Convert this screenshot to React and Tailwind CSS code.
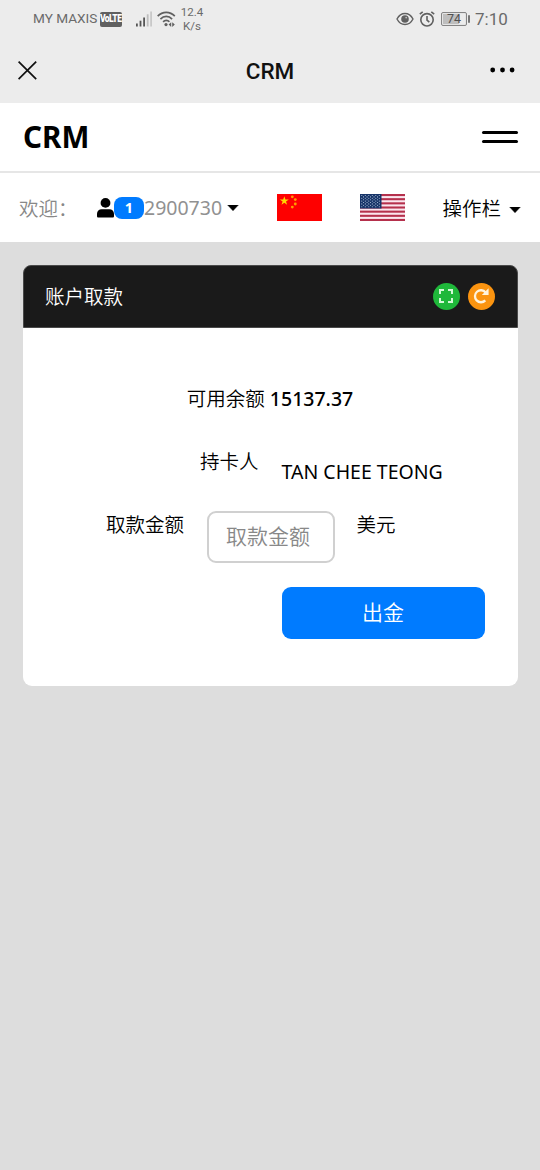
import React from 'react';

const STARS = Array.from({ length: 9 }, (_, row) =>
  Array.from({ length: row % 2 ? 5 : 6 }, (_, col) => ({
    x: 1.8 + col * 3.5 + (row % 2 ? 1.75 : 0),
    y: 1.5 + row * 1.4,
  }))
).flat();

const STRIPES = [0, 2, 4, 6, 8, 10, 12];

const Caret = ({ className }) => (
  <svg viewBox="0 0 12 6" className={className}>
    <path d="M0.6 0h10.8L6 5.8z" fill="currentColor" stroke="currentColor" strokeWidth="0.4" strokeLinejoin="round" />
  </svg>
);

const ChinaFlag = () => (
  <svg viewBox="0 0 45 27" className="h-[27px] w-[45px]">
    <rect width="45" height="27" fill="#fe0000" />
    <path d="M7.3 2.2l1.1 3.3h3.4L9 7.5l1.1 3.3-2.8-2-2.8 2 1.1-3.3-2.8-2h3.4z" fill="#ffd800" />
    <g fill="#ff9d00">
      <circle cx="15.3" cy="2.8" r="1.4" />
      <circle cx="18.3" cy="5.6" r="1.4" />
      <circle cx="18.3" cy="10" r="1.4" />
      <circle cx="15.3" cy="13.1" r="1.4" />
    </g>
  </svg>
);

const UsaFlag = () => (
  <svg viewBox="0 0 45 27" className="h-[27px] w-[45px]">
    <rect width="45" height="27" fill="#fbe6ee" />
    {STRIPES.map((i) => (
      <rect key={i} y={(i * 27) / 13} width="45" height={27 / 13} fill="#b5304c" />
    ))}
    <rect width="21.5" height="14.5" fill="#173468" />
    {STARS.map((s) => (
      <circle key={`${s.x}-${s.y}`} cx={s.x} cy={s.y} r="0.55" fill="#b9cbe0" />
    ))}
  </svg>
);

const StatusBar = () => (
  <div className="flex h-[38px] items-center pl-[33px] font-[Roboto,sans-serif] font-normal text-[#6a6a6a]">
    <span className="w-[67px] whitespace-nowrap text-[13.6px] leading-none">MY MAXIS</span>
    <span className="flex h-[15px] w-[22px] items-center justify-center rounded-[2px] bg-[#606060] text-white">
      <span className="scale-x-85 text-[10px] font-black leading-none tracking-[-0.6px]">VoLTE</span>
    </span>
    <svg viewBox="0 0 17 16" className="ml-[14px] h-[16px] w-[17px]">
      <rect x="0" y="12.5" width="1.8" height="3" fill="#555" />
      <rect x="3.6" y="9.7" width="1.8" height="5.8" fill="#555" />
      <rect x="7.2" y="6.5" width="1.8" height="9" fill="#555" />
      <rect x="10.8" y="3.3" width="1.8" height="12.2" fill="#bdbdbd" />
      <rect x="14.2" y="0.5" width="1.8" height="15" fill="#c8c8c8" />
    </svg>
    <svg viewBox="0 0 19 16" className="ml-[4px] h-[16px] w-[19px]" fill="none" stroke="#606060" strokeWidth="1.7">
      <path d="M0.7 5.2C5.5 0.1 13 0.1 17.8 5.2" />
      <path d="M3.4 8.1C6.9 4.5 11.7 4.5 15.1 8.1" />
      <path d="M6.1 10.8C8 8.8 10.6 8.8 12.4 10.8" />
      <circle cx="9" cy="13.6" r="1.6" fill="#606060" stroke="none" />
      <path d="M14.2 11.2l-2.6 2.4 2.6 2.4zM15.2 11.2l2.6 2.4-2.6 2.4z" fill="#606060" stroke="none" />
    </svg>
    <div className="ml-[3px] w-[26px] pt-px text-center text-[11.5px] leading-[13.5px]">
      <div>12.4</div>
      <div>K/s</div>
    </div>
    <svg viewBox="0 0 18 14" className="ml-[191px] h-[14px] w-[18px]" fill="none" stroke="#606060" strokeWidth="1.4">
      <path d="M1 7C4.8-0.4 13.2-0.4 17 7C13.2 14.4 4.8 14.4 1 7z" />
      <circle cx="9" cy="7" r="3.8" fill="#606060" stroke="none" />
      <circle cx="10.2" cy="5.6" r="0.9" fill="#bbb" stroke="none" />
    </svg>
    <svg viewBox="0 0 16 16" className="ml-[5px] h-[16px] w-[16px]" fill="none" stroke="#606060" strokeWidth="1.6">
      <circle cx="8" cy="8.8" r="6.2" />
      <path d="M8 5v4.1l2.3 2.1M0.8 3.2L3.7 0.9M15.2 3.2L12.3 0.9" />
    </svg>
    <span className="ml-[6px] flex h-[14px] w-[26px] items-center justify-center rounded-[2px] border border-[#858585] bg-[#e4e4e4] p-px">
      <span className="flex h-full w-full items-center justify-center bg-linear-to-r from-[#bebebe] from-74% to-[#ececec] to-74% text-[12.5px] leading-none text-[#505050]">
        74
      </span>
    </span>
    <span className="ml-[1px] h-[8px] w-[2px] rounded-[1px] bg-[#777]" />
    <span className="ml-[5px] text-[17px] leading-none">7:10</span>
  </div>
);

const TitleBar = () => (
  <div className="flex h-[64.5px] items-center justify-between pr-[25px] pl-[18px] text-[#111]">
    <svg viewBox="0 0 19 19" className="h-[19px] w-[19px]" fill="none" stroke="currentColor" strokeWidth="1.7">
      <path d="M0.6 0.6l17.6 17.6M18.2 0.6L0.6 18.2" />
    </svg>
    <span className="pt-[2px] pl-[13px] font-[Roboto,sans-serif] text-[22.5px] font-medium leading-none">CRM</span>
    <svg viewBox="0 0 25 6" className="h-[6px] w-[25px]" fill="#000">
      <circle cx="2.7" cy="3" r="2.4" />
      <circle cx="12.5" cy="3" r="2.4" />
      <circle cx="22.1" cy="3" r="2.4" />
    </svg>
  </div>
);

const BrandBar = () => (
  <div className="flex h-[70.5px] items-center justify-between border-b-2 border-[#e6e6e6] bg-white pr-[22.5px] pl-[23px]">
    <span className="text-[29.6px] font-bold leading-none">CRM</span>
    <button className="flex w-[36px] flex-col gap-[6px]">
      <span className="h-[3px] rounded-full bg-black" />
      <span className="h-[3px] rounded-full bg-black" />
    </button>
  </div>
);

const NavBar = () => (
  <div className="flex h-[69px] items-center bg-white pl-[19px] text-[19.5px] leading-[28px]">
    <span className="w-[78px] whitespace-nowrap pt-[2px] text-[#888]">欢迎：</span>
    <svg viewBox="0 0 17 20" className="h-[20px] w-[17px]">
      <circle cx="8.5" cy="4.9" r="4.9" />
      <path d="M0 18.2v-2.4C0 13.2 2 11.3 4.6 11.3h7.8c2.6 0 4.6 1.9 4.6 4.5v2.4c0 .8-.6 1.3-1.3 1.3H1.3C.6 19.5 0 19 0 18.2z" />
    </svg>
    <span className="flex h-[22px] w-[30px] items-center justify-center rounded-[8px] bg-[#007bff] text-[14.5px] font-bold leading-none text-white">1</span>
    <span className="w-[83px] pt-px font-normal text-[#919191]">2900730</span>
    <Caret className="h-[6px] w-[12px]" />
    <div className="ml-[38px] flex gap-[38px]">
      <ChinaFlag />
      <UsaFlag />
    </div>
    <span className="ml-[37.5px] w-[66px] whitespace-nowrap pt-[2px]">操作栏</span>
    <Caret className="mt-[5px] h-[6px] w-[12px]" />
  </div>
);

const CardHeader = () => (
  <div className="flex h-[63px] items-center rounded-t-[8px] border border-[#4a4a4a] bg-[#1a1a1a] pr-[22px] pl-[21.5px] text-white">
    <span className="flex-1 pt-px">账户取款</span>
    <button className="flex size-[27px] items-center justify-center rounded-full bg-[#1fb83a]">
      <svg viewBox="0 0 14 14" className="size-[14px]" fill="none" stroke="#d5f8d8" strokeWidth="2">
        <path d="M1 5V1h4M9 1h4v4M13 9v4H9M5 13H1V9" />
      </svg>
    </button>
    <button className="ml-[8px] flex size-[27px] items-center justify-center rounded-full bg-[#fb9410]">
      <svg viewBox="0 0 16 16" className="size-[16px]" fill="none" stroke="#fff3dc" strokeWidth="2.3">
        <path d="M12.3 12.4A6 6 0 1 1 12.6 4.4" />
        <path d="M15.6 0.2v6.8H8.8l2.6-2.5 1.9-2.1z" fill="#fff3dc" stroke="none" />
      </svg>
    </button>
  </div>
);

const WithdrawCard = () => (
  <div className="mx-[22.5px] mt-[22.5px] h-[421.5px] rounded-[9px] bg-white text-[19.5px] leading-[28px]">
    <CardHeader />
    <div className="pt-[57px]">
      <p className="text-center">
        可用余额 <b className="font-medium">15137.37</b>
      </p>
      <div className="mt-[35px] flex h-[63px] items-start">
        <span className="w-[236px] text-right">持卡人</span>
        <span className="mt-[10px] ml-[23px] whitespace-nowrap font-normal">TAN CHEE TEONG</span>
      </div>
      <div className="flex h-[76px] items-start">
        <span className="w-[161.5px] text-right">取款金额</span>
        <input
          placeholder="取款金额"
          className="ml-[22.5px] h-[52px] w-[128px] rounded-[9px] border-2 border-[#d0d0d0] px-[17.5px] pb-[2px] text-[21px] placeholder:text-[#888]"
        />
        <span className="ml-[22px]">美元</span>
      </div>
      <button className="ml-[259px] h-[52px] w-[203px] rounded-[9px] bg-[#007bff] pb-px text-[21px] text-white">出金</button>
    </div>
  </div>
);

const App = () => (
  <div className="h-[1170px] w-[540px] overflow-hidden bg-[#dddddd] font-['Noto_Sans','Noto_Sans_CJK_SC',sans-serif] font-[350] text-black">
    <div className="bg-[#ececec]">
      <StatusBar />
      <TitleBar />
    </div>
    <BrandBar />
    <NavBar />
    <WithdrawCard />
  </div>
);

export default App;
